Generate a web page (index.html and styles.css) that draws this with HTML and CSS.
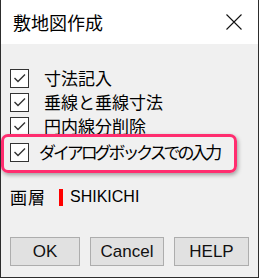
FILE: index.html
```html
<!DOCTYPE html>
<html lang="ja">
<head>
<meta charset="utf-8">
<link rel="stylesheet" href="styles.css">
</head>
<body>
<div class="window">
  <div class="titlebar">
    <span class="title">敷地図作成</span>
    <svg class="close" width="16" height="16" viewBox="0 0 16 16"><path d="M0.5 0.5 L15.5 15.5 M15.5 0.5 L0.5 15.5" stroke="#111" stroke-width="1.1" fill="none"/></svg>
  </div>
  <div class="content">
    <div class="row">
      <span class="box"><svg width="18" height="18" viewBox="0 0 18 18"><path d="M3.5 9 L7 12.5 L14 5.5" stroke="#333" stroke-width="1.4" fill="none"/></svg></span>
      <span class="label">寸法記入</span>
    </div>
    <div class="row">
      <span class="box"><svg width="18" height="18" viewBox="0 0 18 18"><path d="M3.5 9 L7 12.5 L14 5.5" stroke="#333" stroke-width="1.4" fill="none"/></svg></span>
      <span class="label">垂線と垂線寸法</span>
    </div>
    <div class="row">
      <span class="box"><svg width="18" height="18" viewBox="0 0 18 18"><path d="M3.5 9 L7 12.5 L14 5.5" stroke="#333" stroke-width="1.4" fill="none"/></svg></span>
      <span class="label">円内線分削除</span>
    </div>
    <div class="row row-hl">
      <span class="box"><svg width="18" height="18" viewBox="0 0 18 18"><path d="M3.5 9 L7 12.5 L14 5.5" stroke="#333" stroke-width="1.4" fill="none"/></svg></span>
      <span class="label label-kana">ダイアログボックスでの入力</span>
    </div>
    <div class="layer">
      <span class="layer-label">画層</span>
      <span class="swatch"></span>
      <span class="layer-name">SHIKICHI</span>
    </div>
    <div class="buttons">
      <button class="btn btn-ok">OK</button>
      <button class="btn btn-cancel">Cancel</button>
      <button class="btn btn-help">HELP</button>
    </div>
  </div>
  <div class="highlight"></div>
</div>
</body>
</html>
```
FILE: styles.css
```css
html, body {
  margin: 0;
  padding: 0;
  background: #f0f0f0;
}
.window {
  position: relative;
  width: 259px;
  height: 278px;
  box-sizing: border-box;
  border: 1px solid #2d2d2d;
  border-top: none;
  background: #f0f0f0;
  display: flex;
  flex-direction: column;
  font-family: "Noto Sans CJK JP", "Liberation Sans", sans-serif;
  color: #000;
}
.titlebar {
  height: 44px;
  flex: none;
  background: #fff;
  display: flex;
  align-items: center;
  justify-content: space-between;
  padding: 0 16px 0 12px;
}
.title {
  font-size: 18px;
  line-height: 24px;
}
.close {
  display: block;
}
.content {
  display: flex;
  flex-direction: column;
  padding: 22px 0 0 9px;
}
.row {
  height: 24px;
  display: flex;
  align-items: center;
}
.row-hl {
  margin-top: 2px;
}
.box {
  width: 19px;
  height: 19px;
  box-sizing: border-box;
  border: 1px solid #333;
  background: #fff;
  display: flex;
  align-items: center;
  justify-content: center;
  flex: none;
}
.box svg {
  display: block;
  flex: none;
}
.label {
  margin-left: 15px;
  font-size: 17px;
  line-height: 24px;
  white-space: nowrap;
}
.label-kana {
  margin-left: 10px;
  letter-spacing: -3.1px;
}
.layer {
  margin-top: 21px;
  height: 24px;
  display: flex;
  align-items: center;
}
.layer-label {
  font-size: 17px;
  line-height: 24px;
  letter-spacing: 1px;
}
.swatch {
  width: 4px;
  height: 17px;
  background: #f00;
  margin-left: 13px;
}
.layer-name {
  margin-left: 7px;
  font-family: "Liberation Sans", sans-serif;
  font-size: 16px;
  line-height: 24px;
}
.buttons {
  margin-top: 28px;
  display: flex;
  gap: 10px;
}
.btn {
  height: 29px;
  box-sizing: border-box;
  border: 1px solid #adadad;
  background: #e1e1e1;
  font-family: "Liberation Sans", sans-serif;
  font-size: 17px;
  color: #111;
  padding: 0;
  margin: 0;
  display: flex;
  align-items: center;
  justify-content: center;
}
.btn-ok { width: 70px; }
.btn-cancel { width: 74px; }
.btn-help { width: 75px; }
.highlight {
  position: absolute;
  left: 0;
  top: 134px;
  width: 236px;
  height: 39px;
  box-sizing: border-box;
  border: 3px solid #ff2d6f;
  border-radius: 7px;
  box-shadow: 1px 2px 4px rgba(0, 0, 0, 0.35);
  pointer-events: none;
}
```
